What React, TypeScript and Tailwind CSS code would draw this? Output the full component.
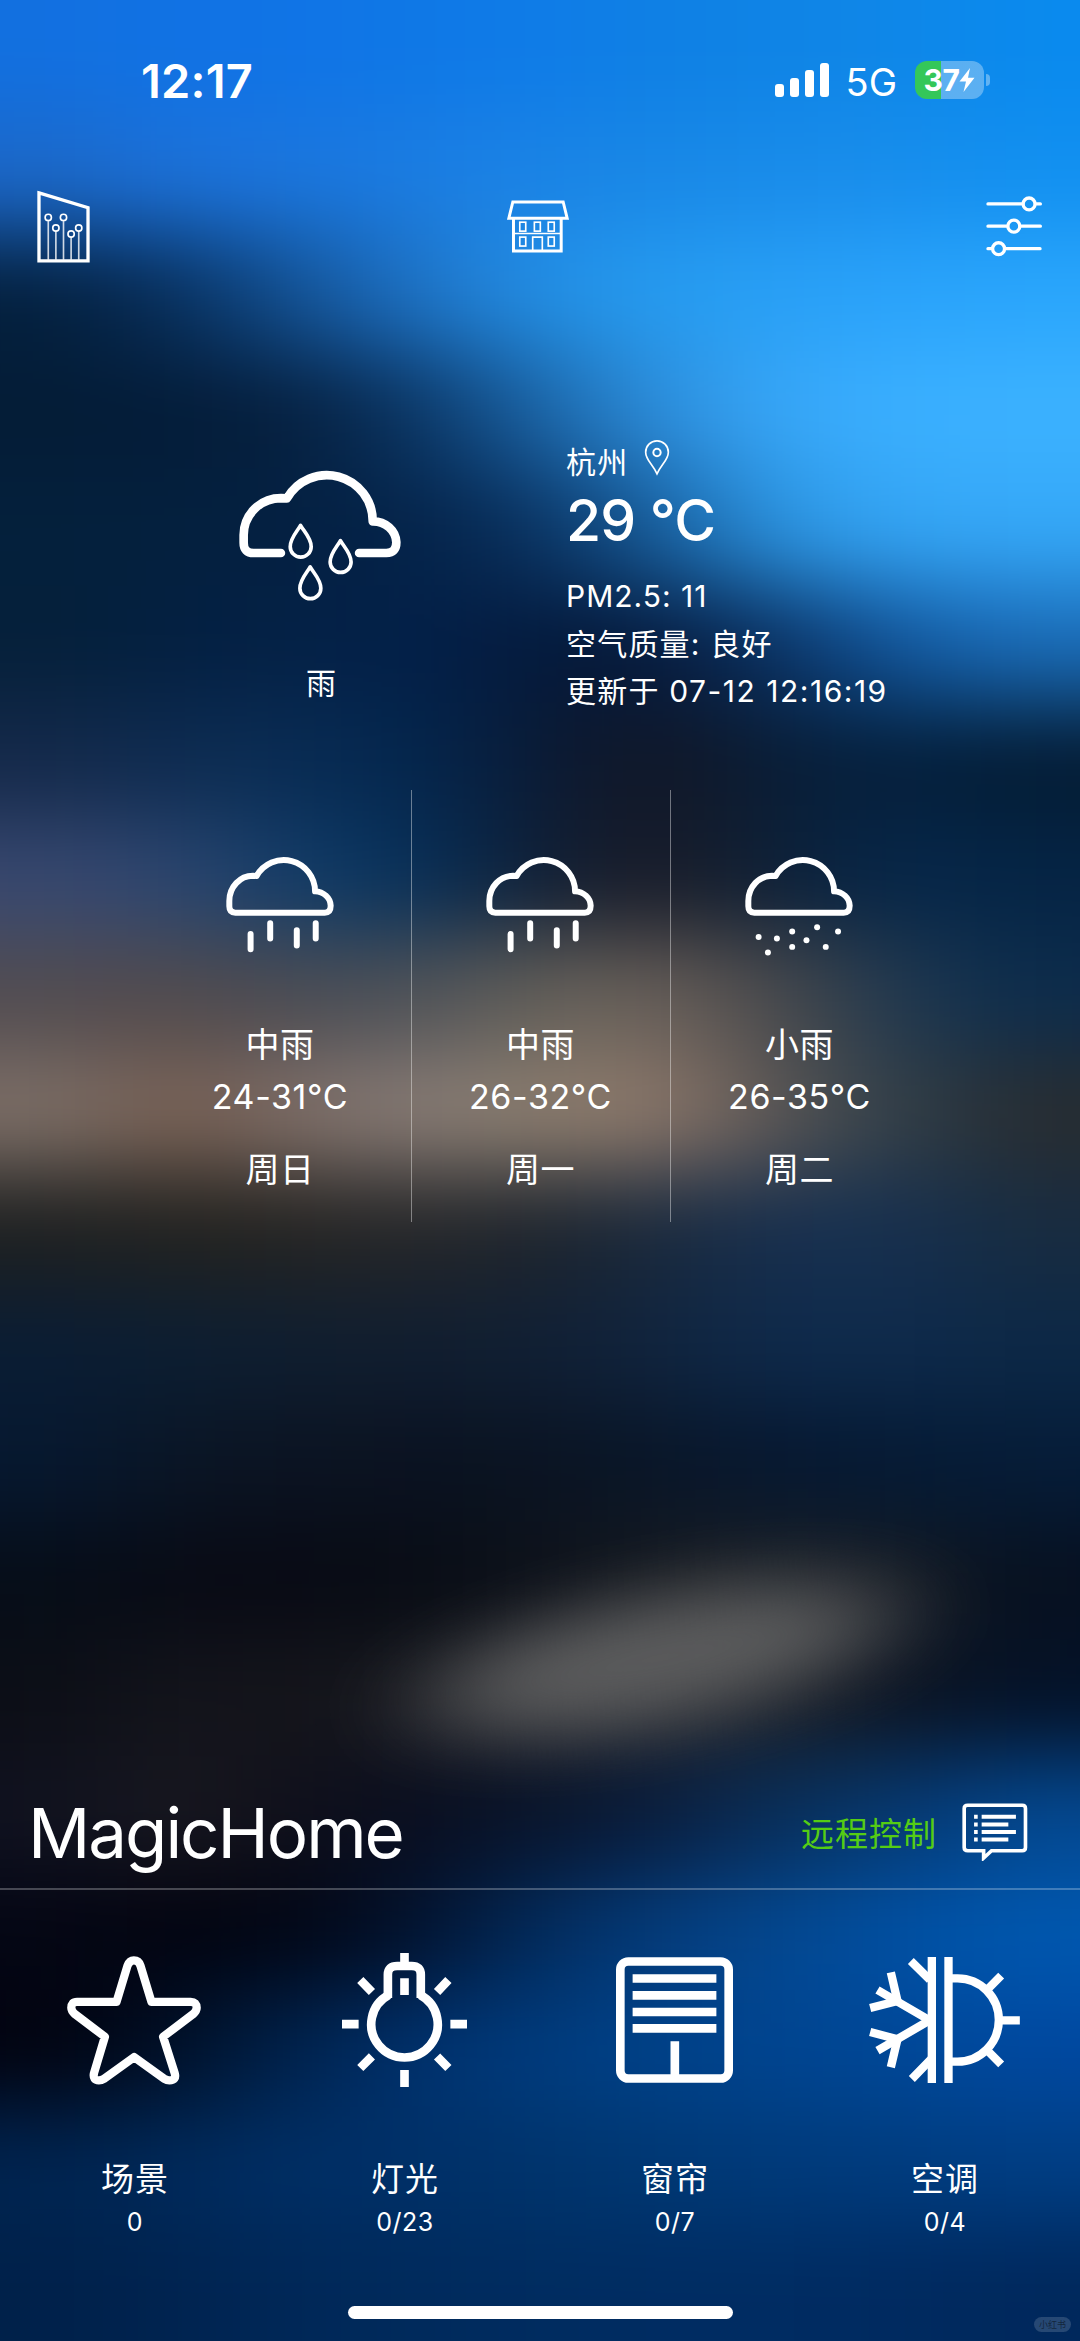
import type { ReactNode } from "react";

// Coarse colour map of the wallpaper, blurred into a soft backdrop
const WALLPAPER: string[][] = [
	["#1270e0", "#1172e4", "#1074e6", "#0f78e6", "#0f7ce8", "#0f80e4", "#0f84e6", "#0f87e8", "#0a8aee"],
	["#1c68c8", "#1d72da", "#1b76de", "#1b7de2", "#1b84e6", "#1888e6", "#1a8cea", "#188eec", "#1290f0"],
	["#04203e", "#08305e", "#145498", "#1f74c8", "#2390e6", "#269cf0", "#29a0f6", "#2aa3fb", "#2aa6fc"],
	["#041c36", "#041c38", "#06203f", "#0b3665", "#1b65a8", "#2e90de", "#38a8fa", "#3bb0ff", "#3cb2ff"],
	["#04203c", "#04203e", "#042042", "#042349", "#0a3260", "#1860a0", "#2c96e4", "#35a6f6", "#35a8f8"],
	["#05203a", "#032042", "#042146", "#03204a", "#04193a", "#061a3c", "#0a3264", "#1258a0", "#1a6cb8"],
	["#14294a", "#0e2c52", "#082c54", "#03264e", "#0a1a34", "#131624", "#081e38", "#04203e", "#041c34"],
	["#384870", "#2c4670", "#103c68", "#06305a", "#101e34", "#1c1c26", "#0c2038", "#06284c", "#052444"],
	["#524c50", "#524a4c", "#4a4c54", "#4e5258", "#646058", "#6a605a", "#48484a", "#1f3850", "#0c2c4c"],
	["#7e7068", "#785e50", "#80706a", "#8a7e78", "#8c7e6e", "#927a6c", "#585452", "#2f3f4a", "#282c30"],
	["#1e2020", "#22221f", "#252422", "#26272a", "#1e242c", "#1a2a3e", "#183050", "#163050", "#182c40"],
	["#0a1d34", "#0c1e32", "#0f1e30", "#111e30", "#101f34", "#10243e", "#0e2a4c", "#0e2a4c", "#0c2846"],
	["#061830", "#0a1524", "#0c1322", "#0a1220", "#0a1322", "#091628", "#061730", "#041a34", "#051c38"],
	["#060d18", "#080a14", "#080a14", "#080c14", "#0e121a", "#161a20", "#1c2026", "#141a22", "#061020"],
	["#0c0e16", "#14151c", "#14141a", "#181a20", "#22242a", "#24262c", "#1a1e26", "#0c1422", "#041228"],
	["#101220", "#1a1920", "#0e0e1a", "#0a0e20", "#08142a", "#0a1c3c", "#08305c", "#063870", "#044890"],
	["#040614", "#02030f", "#020614", "#02122e", "#022c5e", "#043c7c", "#044890", "#0050a4", "#0058b0"],
	["#02030f", "#001028", "#002450", "#003270", "#003c7e", "#00428a", "#004490", "#004898", "#0048a0"],
	["#002450", "#002a5c", "#002f66", "#003068", "#00346c", "#003874", "#003a7a", "#003c7e", "#003e84"],
	["#00214a", "#002350", "#002858", "#002a5c", "#002c60", "#002c62", "#002c62", "#002a60", "#00285c"],
];

const CELL_W = 120;
const CELL_H = 117.05;

function Wallpaper() {
	const rows = [WALLPAPER[0], ...WALLPAPER, WALLPAPER[WALLPAPER.length - 1]];
	return (
		<svg
			className="absolute inset-0 h-full w-full"
			viewBox="0 0 1080 2341"
			preserveAspectRatio="none"
			aria-hidden="true"
		>
			<defs>
				<filter
					id="soften"
					filterUnits="userSpaceOnUse"
					x="-240"
					y="-117"
					width="1560"
					height="2575"
					colorInterpolationFilters="sRGB"
				>
					<feGaussianBlur stdDeviation="68 42" />
				</filter>
				<filter
					id="glow"
					filterUnits="userSpaceOnUse"
					x="100"
					y="1350"
					width="1100"
					height="600"
					colorInterpolationFilters="sRGB"
				>
					<feGaussianBlur stdDeviation="58 32" />
				</filter>
			</defs>
			<g filter="url(#soften)">
				{rows.map((row, r) =>
					[row[0], row[0], ...row, row[row.length - 1], row[row.length - 1]].map(
						(color, c) => (
							<rect
								key={`${r}-${c}`}
								x={(c - 2) * CELL_W}
								y={(r - 1) * CELL_H}
								width={CELL_W + 1}
								height={CELL_H + 1}
								fill={color}
							/>
						),
					),
				)}
			</g>
			<ellipse
				cx="660"
				cy="1658"
				rx="235"
				ry="62"
				fill="#666666"
				opacity="0.85"
				transform="rotate(-11 660 1658)"
				filter="url(#glow)"
			/>
		</svg>
	);
}

interface IconProps {
	viewBox: string;
	className: string;
	strokeWidth: number;
	children: ReactNode;
}

function Icon({ viewBox, className, strokeWidth, children }: IconProps) {
	return (
		<svg
			viewBox={viewBox}
			className={className}
			fill="none"
			stroke="currentColor"
			strokeWidth={strokeWidth}
		>
			{children}
		</svg>
	);
}

function StatusBar() {
	return (
		<div className="flex h-[160px] shrink-0 items-center justify-between pl-[141px] pr-[90px]">
			<span className="text-[47px] font-semibold leading-none tracking-[0.2px]">
				12:17
			</span>
			<div className="flex items-center">
				<div className="flex h-[34px] items-end gap-[6px]">
					<div className="h-[13px] w-[9px] rounded-[3px] bg-white" />
					<div className="h-[19px] w-[9px] rounded-[3px] bg-white" />
					<div className="h-[27px] w-[9px] rounded-[3px] bg-white" />
					<div className="h-[34px] w-[9px] rounded-[3px] bg-white" />
				</div>
				<span className="ml-[17px] mt-[3px] text-[38px] leading-none">5G</span>
				<div className="ml-[18px] flex h-[38px] w-[69px] items-center justify-center rounded-[12px] bg-[linear-gradient(90deg,#34c759_38%,rgba(255,255,255,0.32)_38%)]">
					<span className="text-[30px] font-bold leading-none tracking-[-0.5px]">
						37
					</span>
					<svg viewBox="0 0 16 24" className="h-[24px] w-[16px]" fill="white">
						<path d="M11 0L0.5 13.5H7L4.5 24L15.5 9.8H9Z" />
					</svg>
				</div>
				<div className="ml-[2px] h-[12px] w-[4px] rounded-r-full bg-white/35" />
			</div>
		</div>
	);
}

function TopBar() {
	return (
		<div className="flex h-[133px] shrink-0 items-center justify-between pl-[37px] pr-[37px]">
			<Icon viewBox="111 480 160 219" className="h-[73px] w-[53px]" strokeWidth={10}>
				<path d="M117 488L265 533V693H117Z" />
				<g strokeWidth="5">
					{[
						[145, 562],
						[168, 594],
						[191, 562],
						[214, 612],
						[237, 594],
					].map(([x, y]) => (
						<g key={x}>
							<circle cx={x} cy={y} r="9.5" />
							<path d={`M${x} ${y + 10}V690`} opacity="0.8" />
						</g>
					))}
				</g>
			</Icon>
			<Icon viewBox="85 60 186 160" className="h-[53px] w-[62px]" strokeWidth={9}>
				<path d="M102 66H254L266 115H90Z" />
				<path d="M104 115V214H248V115" />
				<g strokeWidth="5">
					<path d="M104 161H248M162 214V172H191V214" />
					<rect x="123" y="127" width="18" height="27" />
					<rect x="167" y="127" width="18" height="27" />
					<rect x="209" y="127" width="18" height="27" />
					<rect x="123" y="172" width="18" height="27" />
					<rect x="209" y="172" width="18" height="27" />
				</g>
			</Icon>
			<Icon viewBox="740 466 170 184" className="h-[61px] w-[57px]" strokeWidth={10}>
				<g strokeLinecap="round">
					<path d="M745 490H850M888 490H903M745 557H804M842 557H903M745 625H758M796 625H902" />
					<circle cx="869" cy="490" r="18" />
					<circle cx="823" cy="557" r="18" />
					<circle cx="777" cy="625" r="18" />
				</g>
			</Icon>
		</div>
	);
}

const DROP = "M242 257C232 275 211 295 211 321A31.5 31.5 0 0 0 274 321C274 295 252 275 242 257Z";

function CurrentWeather() {
	return (
		<div className="flex shrink-0 pl-[239px] pt-[149px]">
			<div className="flex w-[162px] flex-col items-center pt-[27px]">
				<Icon viewBox="57 88 487 396" className="h-[132px] w-[162px]" strokeWidth={26}>
					<path
						d="M183 340H101Q71 340 71 309V286A112 111 0 0 1 183 175L201 176A138 138 0 0 1 459 245A70 66 0 0 1 530 308Q530 340 500 340H418"
						strokeLinecap="round"
						strokeLinejoin="round"
					/>
					<g strokeWidth="11" strokeLinejoin="round">
						<path d={DROP} />
						<path d={DROP} transform="translate(120 46)" />
						<path d={DROP} transform="translate(29 125)" />
					</g>
				</Icon>
				<p className="mt-[62px] pl-[2px] text-[30px] leading-[40px]">雨</p>
			</div>
			<div className="ml-[165px]">
				<div className="flex h-[40px] items-center">
					<span className="text-[30px] leading-[40px] tracking-[1.2px]">杭州</span>
					<Icon
						viewBox="284 55 78 110"
						className="mb-[10px] ml-[16px] h-[37px] w-[26px]"
						strokeWidth={5}
					>
						<path d="M323 159C310 130 289 117 289 94A34 34 0 0 1 357 94C357 117 336 130 323 159Z" />
						<circle cx="323" cy="95" r="11" strokeWidth="6" />
					</Icon>
				</div>
				<p className="mt-[4px] text-[57px] font-medium leading-[70px] tracking-[-0.8px]">
					29 °C
				</p>
				<div className="mt-[17px] text-[30px] leading-[47.5px] tracking-[1.2px]">
					<p className="tracking-[1px]">PM2.5: 11</p>
					<p>空气质量: 良好</p>
					<p>
						更新于 <span className="tracking-[1.5px]">07-12 12:16:19</span>
					</p>
				</div>
			</div>
		</div>
	);
}

const DRIZZLE_DOTS = [
	[118, 470],
	[146, 517],
	[173, 475],
	[219, 454],
	[219, 500],
	[262, 480],
	[294, 441],
	[320, 500],
	[357, 454],
];

function ForecastIcon({ kind }: { kind: "rain" | "drizzle" }) {
	return (
		<Icon viewBox="77 230 325 297" className="h-[99px] w-[108px]" strokeWidth={18}>
			<path
				d="M105 397H374Q392 397 392 376A48 44 0 0 0 345 333A94 94 0 0 0 169 287L158 286A71 76 0 0 0 87 362V378Q87 397 105 397Z"
				strokeLinejoin="round"
			/>
			{kind === "rain" ? (
				<path
					d="M151 461V507M210 429V475M290 450V496M347 429V475"
					strokeLinecap="round"
				/>
			) : (
				<g fill="currentColor" stroke="none">
					{DRIZZLE_DOTS.map(([x, y]) => (
						<circle key={`${x}-${y}`} cx={x} cy={y} r="9" />
					))}
				</g>
			)}
		</Icon>
	);
}

const FORECAST = [
	{ day: "周日", text: "中雨", temp: "24-31°C", kind: "rain" as const },
	{ day: "周一", text: "中雨", temp: "26-32°C", kind: "rain" as const },
	{ day: "周二", text: "小雨", temp: "26-35°C", kind: "drizzle" as const },
];

function Forecast() {
	return (
		<div className="ml-[150px] mt-[74px] grid h-[432px] shrink-0 grid-cols-[262px_259px_258px]">
			{FORECAST.map((f, i) => (
				<div
					key={f.day}
					className={`flex flex-col items-center pr-[2px] pt-[67px] text-[34px] leading-[52px] tracking-[0.6px] ${
						i < 2 ? "border-r border-white/40" : ""
					}`}
				>
					<ForecastIcon kind={f.kind} />
					<p className="mt-[63px] pl-[1px]">{f.text}</p>
					<p className="pl-[1px]">{f.temp}</p>
					<p className="mt-[21px] pl-[1px]">{f.day}</p>
				</div>
			))}
		</div>
	);
}

function TitleBar() {
	return (
		<div className="mt-auto flex h-[102px] shrink-0 items-center justify-between border-b-2 border-white/25 pl-[28px] pr-[52px]">
			<h1 className="mt-[-10px] text-[69px] leading-[88px] tracking-[-2px]">
				MagicHome
			</h1>
			<div className="mb-[8px] flex items-center">
				<span className="text-[33px] leading-[40px] tracking-[1px] text-[#55cc14]">
					远程控制
				</span>
				<Icon
					viewBox="575 97 199 176"
					className="mt-[-4px] ml-[25px] h-[58px] w-[66px]"
					strokeWidth={11}
				>
					<path d="M592 104H757Q767 104 767 114V232Q767 242 757 242H664L640 264V242H592Q581 242 581 232V114Q581 104 592 104Z" />
					<path
						d="M611 139H622M634 139H738M611 162H622M634 162H715M611 185H622M634 185H738M611 208H622M634 208H715"
						strokeWidth="12"
					/>
				</Icon>
			</div>
		</div>
	);
}

const DEVICES = [
	{
		label: "场景",
		count: "0",
		icon: (
			<Icon viewBox="80 75 403 388" className="h-[129px] w-[134px]" strokeWidth={25}>
				<path
					d="M262 104Q268 88 281 88Q296 88 301 104L334 213H452Q470 213 470 231Q470 241 459 250L369 318L404 428Q410 449 388 449Q380 449 374 445L282 379L190 445Q184 449 176 449Q157 449 161 428L194 318L104 250Q93 241 93 231Q93 213 110 213H229Z"
					strokeLinejoin="round"
				/>
			</Icon>
		),
	},
	{
		label: "灯光",
		count: "0/23",
		icon: (
			<Icon viewBox="904 69 376 403" className="h-[134px] w-[125px]" strokeWidth={26}>
				<path d="M1042 204V134Q1042 108 1070 108H1114Q1141 108 1141 134V204" />
				<path d="M1045 195A100 100 0 1 0 1139 195" />
				<path d="M1092 69V106M1092 145V195M1092 421V472M904 283H954M1230 283H1280M959 150L994 186M1224 150L1190 186M959 415L994 380M1224 415L1190 380" />
			</Icon>
		),
	},
	{
		label: "窗帘",
		count: "0/7",
		icon: (
			<Icon viewBox="107 81 352 378" className="h-[126px] w-[117px]" strokeWidth={26}>
				<rect x="120" y="94" width="326" height="352" rx="24" />
				<path d="M157 145H409M157 196H409M157 246H409M157 295H409M284 334V446" />
			</Icon>
		),
	},
	{
		label: "空调",
		count: "0/4",
		icon: (
			<Icon viewBox="865 81 452 378" className="h-[126px] w-[151px]" strokeWidth={25}>
				<path d="M1053 81V459M1103 81V459" />
				<path d="M1110 145H1130A124 125 0 0 1 1130 395H1110" />
				<path d="M1258 271H1317M1220 178L1261 137M1220 362L1261 403" />
				<path d="M990 93L1047 149M993 447L1050 388M1050 273L890 180M1050 269L890 362" />
				<path d="M930 127L950 213L868 234M930 412L950 328L868 306" />
			</Icon>
		),
	},
];

function DeviceGrid() {
	return (
		<div className="grid shrink-0 grid-cols-4 pt-[63px]">
			{DEVICES.map((d) => (
				<div key={d.label} className="flex flex-col items-center pr-[2px]">
					<div className="flex h-[134px] items-center">{d.icon}</div>
					<p className="mt-[69px] pl-[2px] text-[33px] leading-[46px] tracking-[1px]">
						{d.label}
					</p>
					<p className="mt-[2px] pl-[2px] text-[25px] leading-[36px] tracking-[0.5px]">
						{d.count}
					</p>
				</div>
			))}
		</div>
	);
}

export default function App() {
	return (
		<div className="relative h-[2341px] w-[1080px] overflow-hidden bg-[#04162e] font-['Inter','Noto_Sans_CJK_SC',sans-serif] text-white">
			<Wallpaper />
			<div className="relative flex h-full flex-col">
				<StatusBar />
				<TopBar />
				<CurrentWeather />
				<Forecast />
				<TitleBar />
				<DeviceGrid />
				<div className="mb-[22px] ml-[348px] mt-[66px] h-[13px] w-[385px] shrink-0 rounded-full bg-white" />
			</div>
			<span className="absolute bottom-[9px] right-[9px] rounded-full bg-white/15 px-[5px] text-[9px] leading-[15px] text-black/50">
				小红书
			</span>
		</div>
	);
}
